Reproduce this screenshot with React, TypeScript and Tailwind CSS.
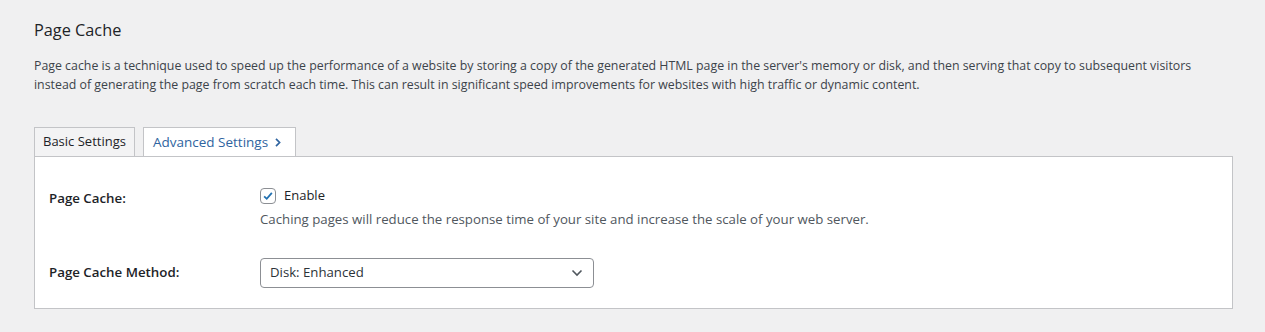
import React from "react";

const App = () => {
  return (
    <div
      className="min-h-[332px] w-full bg-[#f0f0f1] text-[#3c434a] pl-[34px] pr-[32px] pt-[18px]"
      style={{ fontFamily: '"Open Sans", "Noto Sans", sans-serif' }}
    >
      <h2 className="text-[16.3px] font-medium text-[#1d2327] leading-[24px]">Page Cache</h2>
      <p className="mt-[14px] leading-[19px] text-[12.35px] max-w-[1180px]">
        Page cache is a technique used to speed up the performance of a website by storing a copy of
        the generated HTML page in the server's memory or disk, and then serving that copy to subsequent
        visitors instead of generating the page from scratch each time. This can result in significant
        speed improvements for websites with high traffic or dynamic content.
      </p>
      <div className="mt-[33px] flex items-end gap-[8px]">
        <div className="h-[29px] px-[8px] flex items-center bg-[#f3f3f4] border border-[#c3c4c7] border-b-0 text-[#1d2327] text-[13px]">
          Basic Settings
        </div>
        <div className="h-[29px] pl-[9px] pr-[13px] flex items-center gap-[6px] bg-white border border-[#c3c4c7] border-b-0 text-[#2f64a0] text-[13.5px]">
          Advanced Settings
          <svg width="8" height="11" viewBox="0 0 8 11" fill="none">
            <path d="M2 1.8 L5.6 5.5 L2 9.2" stroke="#2f64a0" strokeWidth="1.7" />
          </svg>
        </div>
      </div>
      <div className="bg-white border border-[#c3c4c7] h-[153px] px-[14px] pt-[29px]">
        <div className="flex">
          <div className="w-[211px] pt-[3px] font-semibold text-[#1d2327] text-[13.3px]">Page Cache:</div>
          <div className="flex flex-col">
            <label className="flex items-center gap-[8px] text-[#1d2327] text-[13px]">
              <span className="w-[16px] h-[16px] rounded-[4px] border border-[#8c8f94] flex items-center justify-center bg-white">
                <svg width="14" height="14" viewBox="0 0 20 20">
                  <path d="M4.5 10.5 L8.2 14 L15.5 5.5" stroke="#2271b1" strokeWidth="2.6" fill="none" />
                </svg>
              </span>
              Enable
            </label>
            <div className="mt-[4px] text-[#50575e] text-[13.24px]">
              Caching pages will reduce the response time of your site and increase the scale of your web server.
            </div>
          </div>
        </div>
        <div className="flex items-center mt-[29px]">
          <div className="w-[211px] font-semibold text-[#1d2327] text-[13.3px]">Page Cache Method:</div>
          <div className="w-[334px] h-[30px] border border-[#8c8f94] rounded-[4px] flex items-center justify-between pl-[9px] pr-[10px] text-[#2c3338] text-[13.2px]">
            Disk: Enhanced
            <svg width="12" height="8" viewBox="0 0 12 8" fill="none">
              <path d="M1.5 1.5 L6 6 L10.5 1.5" stroke="#50575e" strokeWidth="1.6" />
            </svg>
          </div>
        </div>
      </div>
    </div>
  );
};

export default App;
